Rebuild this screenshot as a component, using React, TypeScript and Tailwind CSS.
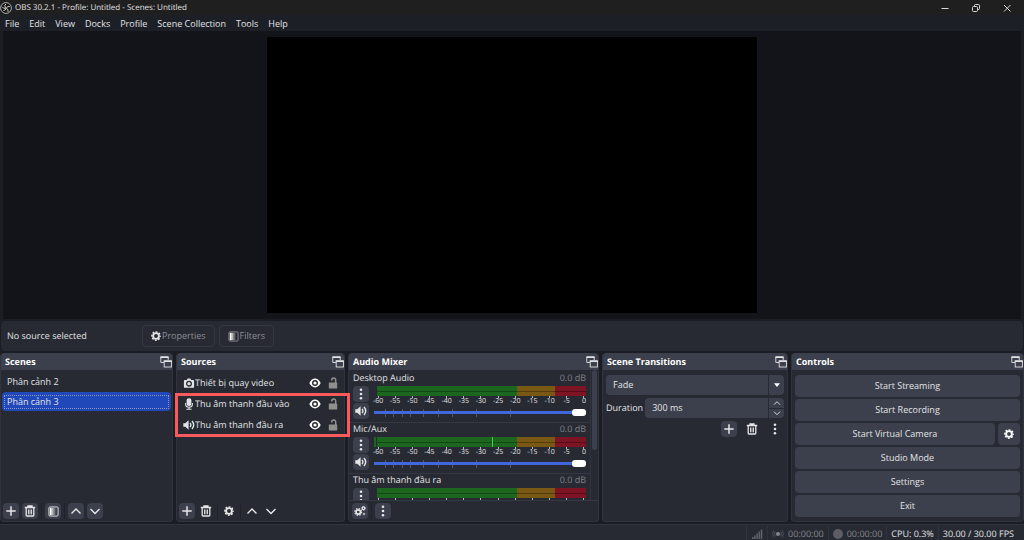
import { useState } from 'react';
import type { ReactNode } from 'react';
import clsx from 'clsx';

const MENUS = ['File', 'Edit', 'View', 'Docks', 'Profile', 'Scene Collection', 'Tools', 'Help'];
const SCENES = ['Phân cảnh 2', 'Phân cảnh 3'];
const CHANNELS = [
  { name: 'Desktop Audio', peak: false, labels: true },
  { name: 'Mic/Aux', peak: true, labels: true },
  { name: 'Thu âm thanh đầu ra', peak: false, labels: false },
];
const DB_MARKS = [-60, -55, -50, -45, -40, -35, -30, -25, -20, -15, -10, -5, 0];
const FADER_MARKS = [5, 9, 13, 17, 23, 30, 37, 48, 64];

type IconProps = { className?: string };

/* ---------- Icons ---------- */

function GearIcon({ className = 'size-[10px]' }: IconProps) {
  return (
    <svg viewBox="0 0 16 16" className={className} fill="none" stroke="currentColor" aria-hidden="true">
      <circle cx="8" cy="8" r="4.6" strokeWidth="3" />
      <circle cx="8" cy="8" r="6.6" strokeWidth="2.4" strokeDasharray="2.9 2.284" strokeDashoffset="1.45" />
    </svg>
  );
}

function GearsIcon() {
  return (
    <svg viewBox="0 0 24 24" className="size-3" fill="none" stroke="currentColor" aria-hidden="true">
      <circle cx="8.5" cy="14" r="4.4" strokeWidth="3.4" />
      <circle cx="8.5" cy="14" r="6.9" strokeWidth="2.2" strokeDasharray="2.9 2.52" />
      <circle cx="19" cy="6.5" r="2.6" strokeWidth="2.4" />
      <circle cx="19" cy="6.5" r="4" strokeWidth="1.4" strokeDasharray="2 2.19" />
      <circle cx="20" cy="18" r="1.6" strokeWidth="1.6" />
    </svg>
  );
}

function TrashIcon() {
  return (
    <svg viewBox="0 0 12 12" className="size-3" fill="none" stroke="currentColor" aria-hidden="true">
      <path d="M.8 2.5h10.4M4 2.2V1h4v1.2" strokeWidth="1.3" />
      <path d="M2.2 3v7.2q0 .8.8.8h6q.8 0 .8-.8V3" strokeWidth="1.3" />
      <path d="M4.5 4.5v4.8M6 4.5v4.8M7.5 4.5v4.8" strokeWidth=".9" />
    </svg>
  );
}

function FilterIcon() {
  return (
    <svg viewBox="0 0 12 12" className="size-[11px]" aria-hidden="true">
      <rect x="1" y="1" width="10" height="10" rx="1.2" fill="none" stroke="currentColor" />
      <path d="M2 2h2v8H2z" fill="#fff" />
      <path d="M4 2h2v8H4z" fill="#fff" opacity=".65" />
      <path d="M6 2h2v8H6z" fill="#fff" opacity=".3" />
    </svg>
  );
}

function PlusIcon() {
  return (
    <svg viewBox="0 0 12 12" className="size-3" aria-hidden="true">
      <path d="M6 1.3v9.4M1.3 6h9.4" stroke="currentColor" strokeWidth="1.5" />
    </svg>
  );
}

function ChevronIcon({ up = false, className = 'size-3' }: IconProps & { up?: boolean }) {
  return (
    <svg viewBox="0 0 12 12" className={className} fill="none" stroke="currentColor" strokeWidth="1.4" aria-hidden="true">
      <path d={up ? 'M1.5 8.5 6 4l4.5 4.5' : 'M1.5 4 6 8.5 10.5 4'} />
    </svg>
  );
}

function DotsIcon() {
  return (
    <svg viewBox="0 0 12 12" className="size-3" fill="currentColor" aria-hidden="true">
      <circle cx="6" cy="1.8" r="1.3" />
      <circle cx="6" cy="6" r="1.3" />
      <circle cx="6" cy="10.2" r="1.3" />
    </svg>
  );
}

function PopoutIcon() {
  return (
    <svg viewBox="0 0 12 12" className="size-3" fill="none" stroke="currentColor" aria-hidden="true">
      <path d="M4 6.5H.8V1h7.4v3" strokeWidth=".9" />
      <path d="M.4 1.2h8.2" strokeWidth="1.6" />
      <rect x="4.2" y="5" width="7.2" height="6" strokeWidth=".9" />
      <path d="M3.8 5.2h8" strokeWidth="1.6" />
    </svg>
  );
}

function SpeakerIcon() {
  return (
    <svg viewBox="0 0 12 12" className="size-3" fill="none" stroke="currentColor" aria-hidden="true">
      <path d="M.3 4.2h2L5.6 1.3v9.4L2.3 7.8h-2z" fill="currentColor" stroke="none" />
      <path d="M7.1 3.8q1.5 2.2 0 4.4M9 2q3.4 4 0 8" strokeWidth="1.4" />
    </svg>
  );
}

function MicIcon() {
  return (
    <svg viewBox="0 0 12 12" className="size-3" fill="none" stroke="currentColor" aria-hidden="true">
      <rect x="3.6" y=".3" width="4.8" height="7.6" rx="2.2" fill="currentColor" stroke="none" />
      <path d="M2.6 5v1.2q0 3 3.4 3t3.4-3V5M6 9v2M3.4 11.3h5.2" strokeWidth="1.1" />
    </svg>
  );
}

function CameraIcon() {
  return (
    <svg viewBox="0 0 12 12" className="size-3" aria-hidden="true">
      <path
        d="M1.8 3h2L4.7 1.6h2.6L8.2 3h2q.9 0 .9.9v6q0 .9-.9.9H1.8q-.9 0-.9-.9v-6q0-.9.9-.9z"
        fill="currentColor"
      />
      <circle cx="6" cy="6.7" r="2.3" fill="none" stroke="#272a33" strokeWidth="1.3" />
    </svg>
  );
}

function EyeIcon() {
  return (
    <svg viewBox="0 0 12 12" className="size-3" aria-hidden="true">
      <path d="M.3 6Q2.700 1.600 6 1.600t5.700 4.400Q9.300 10.400 6 10.400T.3 6z" fill="currentColor" />
      <circle cx="6" cy="6" r="2.3" fill="none" stroke="#272a33" strokeWidth="1.4" />
    </svg>
  );
}

function UnlockIcon() {
  return (
    <svg viewBox="0 0 12 12" className="size-3" aria-hidden="true">
      <rect x="1.8" y="5.6" width="8.4" height="5.8" rx=".4" fill="currentColor" />
      <path d="M8.700 6V3.200Q8.700 1 6.700 1T4.700 3.400" fill="none" stroke="currentColor" strokeWidth="1.5" />
    </svg>
  );
}

function ObsLogo() {
  return (
    <svg viewBox="0 0 24 24" className="size-3" fill="none" aria-hidden="true">
      <circle cx="12" cy="12" r="10.8" fill="#151515" stroke="#d0d0d0" strokeWidth="1.6" />
      <path
        d="M11.5 4q-3.500 3-.5 7.500 1 1.200 1.500 1.300M19.500 9q-5-1.500-7 3.800-1.500 4-5.500 4.200M12.500 12.800q5 1.500 3.500 7M4.500 9.500q2 4.500 7 3"
        stroke="#d0d0d0"
        strokeWidth="2"
      />
    </svg>
  );
}

/* ---------- Building blocks ---------- */

type ToolButtonProps = { label: string; flat?: boolean; children: ReactNode };

function ToolButton({ label, flat, children }: ToolButtonProps) {
  return (
    <button
      type="button"
      aria-label={label}
      className={clsx(
        'flex size-4 shrink-0 items-center justify-center rounded-sm text-[#e6e6e9]',
        !flat && 'bg-[#3c404c]'
      )}
    >
      {children}
    </button>
  );
}

function Divider() {
  return <span className="h-4 w-px bg-[#1f222a]" />;
}

function Dock({ title, children }: { title: string; children: ReactNode }) {
  return (
    <section className="flex min-w-0 flex-col rounded-sm border border-t-0 border-[#31343f] bg-[#272a33]">
      <header className="flex h-[17px] shrink-0 items-center justify-between rounded-t-sm bg-[#3c404c] pl-1">
        <h2 className="font-bold text-white">{title}</h2>
        <button type="button" aria-label={`Undock ${title}`}>
          <PopoutIcon />
        </button>
      </header>
      {children}
    </section>
  );
}

function SourceRow({ name, icon }: { name: string; icon: ReactNode }) {
  return (
    <li className="flex h-[21px] items-center pl-1.5">
      {icon}
      <span className="flex-1 truncate">{name}</span>
      <button type="button" aria-label={`Hide ${name}`} className="mr-1.5 text-white">
        <EyeIcon />
      </button>
      <button type="button" aria-label={`Lock ${name}`} className="mr-[5px] text-[#8f8f8c]">
        <UnlockIcon />
      </button>
    </li>
  );
}

function Channel({ name, peak, labels }: { name: string; peak: boolean; labels: boolean }) {
  const [volume, setVolume] = useState(100);

  return (
    <div className="h-[51px] shrink-0 border-b border-[#343843] px-1">
      <div className="flex h-3 items-center justify-between">
        <span>{name}</span>
        <span className="text-[#7f828a]">0.0 dB</span>
      </div>
      <div className="mt-0.5 flex gap-[5px]">
        <div className="flex flex-col gap-px">
          <ToolButton label={`${name} options`}>
            <DotsIcon />
          </ToolButton>
          <ToolButton label={`Mute ${name}`}>
            <SpeakerIcon />
          </ToolButton>
        </div>
        <div className="min-w-0 flex-1">
          {/* Level meter, two channels */}
          <div className="relative ml-[3px] flex h-[10px]">
            <span className="w-[67%] bg-[#1c661f]" />
            <span className="w-[18%] bg-[#785813]" />
            <span className="flex-1 bg-[#7d1424]" />
            <span className="absolute inset-x-0 top-[5px] h-px bg-black/30" />
            {peak && <span className="absolute inset-y-0 left-[55%] w-px bg-[#3ed043]" />}
            {peak && <span className="absolute inset-y-0 -left-[3px] w-0.5 bg-[#1c661f]" />}
          </div>
          <div className="ml-1 mr-0.5 flex h-[9px] justify-between text-[7px] leading-[7px]">
            {DB_MARKS.map((db) => (
              <span key={db} className="flex w-0 flex-col items-center">
                <span className="h-0.5 w-px shrink-0 bg-[#b5b7bd]" />
                {labels && db}
              </span>
            ))}
          </div>
          <div className="relative flex h-[15px] items-center">
            {FADER_MARKS.map((mark) => (
              <span key={mark} className="absolute top-1 h-2 w-px bg-[#565a66]" style={{ left: `${mark}%` }} />
            ))}
            <input
              type="range"
              aria-label={`${name} volume`}
              value={volume}
              onChange={(e) => setVolume(Number(e.target.value))}
              className="relative h-[3px] w-full appearance-none bg-[#4068dc] [&::-webkit-slider-thumb]:h-[7px] [&::-webkit-slider-thumb]:w-[14px] [&::-webkit-slider-thumb]:appearance-none [&::-webkit-slider-thumb]:rounded-[3px] [&::-webkit-slider-thumb]:bg-white"
            />
          </div>
        </div>
      </div>
    </div>
  );
}

function ControlButton({ children }: { children: ReactNode }) {
  return (
    <button type="button" className="h-[22px] min-w-0 flex-1 rounded-sm bg-[#3c404c] text-center">
      {children}
    </button>
  );
}

/* ---------- Window ---------- */

export default function App() {
  const [selected, setSelected] = useState('Phân cảnh 3');
  const [duration, setDuration] = useState('300 ms');

  return (
    <div className="flex min-h-screen flex-col bg-[#1b1d24] font-['Open_Sans','Noto_Sans',sans-serif] text-[9px] leading-3 text-[#e2e3e6] [text-rendering:geometricPrecision]">
      <header className="flex h-[15px] items-center bg-[#1f1f1f]">
        <ObsLogo />
        <h1 className="ml-[3px] flex-1 text-[8px]">OBS 30.2.1 - Profile: Untitled - Scenes: Untitled</h1>
        <div className="flex gap-[19px] pr-[11px] text-[#d8d8d8]">
          <button type="button" aria-label="Minimize">
            <svg viewBox="0 0 12 12" className="size-3"><path d="M2.5 6.5h7" stroke="currentColor" /></svg>
          </button>
          <button type="button" aria-label="Restore">
            <svg viewBox="0 0 12 12" className="size-3" fill="none" stroke="currentColor">
              <rect x="2.5" y="4.5" width="5" height="5" rx="1" />
              <path d="M4.5 4.500v-1q0-1 1-1h3q1 0 1 1v3q0 1-1 1h-1" />
            </svg>
          </button>
          <button type="button" aria-label="Close">
            <svg viewBox="0 0 12 12" className="size-3"><path d="m3 3 6.500 6.500M9.500 3 3 9.500" stroke="currentColor" /></svg>
          </button>
        </div>
      </header>

      <nav className="flex h-4 items-center gap-[10px] bg-[#1d1f26] pl-[5px] pt-px">
        {MENUS.map((menu) => (
          <button key={menu} type="button">{menu}</button>
        ))}
      </nav>

      {/* Preview */}
      <main className="mx-[3px] flex flex-1 justify-center bg-[#131419] py-1.5">
        <div className="aspect-video min-h-[276px] bg-black" />
      </main>

      <div className="mx-px mt-0.5 flex h-[30px] items-center rounded-sm bg-[#272a33] pl-1.5">
        <span className="w-[135px]">No source selected</span>
        <button type="button" className="flex h-[22px] items-center gap-px rounded-sm border border-[#343843] px-2 text-[#8b8d94]">
          <span className="text-[#e2e3e6]"><GearIcon /></span>
          Properties
        </button>
        <button type="button" className="ml-1 flex h-[22px] items-center gap-px rounded-sm border border-[#343843] px-2 text-[#8b8d94]">
          <FilterIcon />
          Filters
        </button>
      </div>

      <div className="mt-0.5 grid h-[169px] grid-cols-[173fr_169fr_251fr_186fr_233fr] grid-rows-1 gap-[3px]">
        <Dock title="Scenes">
          <ul className="flex-1 px-px pt-0.5">
            {SCENES.map((scene) => (
              <li key={scene} className="mb-px">
                <button
                  type="button"
                  onClick={() => setSelected(scene)}
                  className={clsx(
                    'block h-[19px] w-full rounded-sm p-0.5 text-left',
                    selected === scene && 'bg-[#2148b8]'
                  )}
                >
                  <span
                    className={clsx(
                      'block border px-0.5',
                      selected === scene ? 'border-dotted border-[#8f98b5]' : 'border-transparent'
                    )}
                  >
                    {scene}
                  </span>
                </button>
              </li>
            ))}
          </ul>
          <div className="flex items-center gap-[3px] px-0.5 pb-0.5">
            <ToolButton label="Add scene"><PlusIcon /></ToolButton>
            <ToolButton label="Remove scene"><TrashIcon /></ToolButton>
            <Divider />
            <ToolButton label="Scene filters"><FilterIcon /></ToolButton>
            <Divider />
            <ToolButton label="Move scene up"><ChevronIcon up /></ToolButton>
            <ToolButton label="Move scene down"><ChevronIcon /></ToolButton>
          </div>
        </Dock>

        <Dock title="Sources">
          <div className="flex-1 pt-0.5">
            <ul>
              <SourceRow name="Thiết bị quay video" icon={<CameraIcon />} />
            </ul>
            <ul className="relative">
              <SourceRow name="Thu âm thanh đầu vào" icon={<MicIcon />} />
              <SourceRow name="Thu âm thanh đầu ra" icon={<SpeakerIcon />} />
              <li aria-hidden="true" className="pointer-events-none absolute -bottom-0.5 -left-0.5 -right-1.5 top-0 z-10 border-3 border-[#fb5a5c]" />
            </ul>
          </div>
          <div className="flex items-center gap-[3px] px-0.5 pb-0.5">
            <ToolButton label="Add source"><PlusIcon /></ToolButton>
            <ToolButton label="Remove source" flat><TrashIcon /></ToolButton>
            <Divider />
            <ToolButton label="Source properties" flat><GearIcon /></ToolButton>
            <Divider />
            <ToolButton label="Move source up" flat><ChevronIcon up /></ToolButton>
            <ToolButton label="Move source down" flat><ChevronIcon /></ToolButton>
          </div>
        </Dock>

        <Dock title="Audio Mixer">
          <div className="flex min-h-0 flex-1 overflow-hidden border-b border-[#343843]">
            <div className="flex min-w-0 flex-1 flex-col pt-0.5">
              {CHANNELS.map((channel) => (
                <Channel key={channel.name} {...channel} />
              ))}
            </div>
            <div className="w-2 border-l border-[#31343f] px-px">
              <div className="h-[80px] rounded-sm bg-[#3c404c]" />
            </div>
          </div>
          <div className="flex items-center gap-[3px] px-[3px] py-0.5">
            <ToolButton label="Advanced audio properties"><GearsIcon /></ToolButton>
            <Divider />
            <ToolButton label="Mixer menu"><DotsIcon /></ToolButton>
          </div>
        </Dock>

        <Dock title="Scene Transitions">
          <div className="flex flex-col gap-[3px] px-[3px] pt-[5px]">
            <div className="relative flex h-5 items-center rounded-sm bg-[#3c404c]">
              <select aria-label="Transition" className="h-full w-full appearance-none pl-[7px]">
                <option>Fade</option>
                <option>Cut</option>
              </select>
              <span className="pointer-events-none absolute inset-y-0 right-0 flex w-4 items-center justify-center border-l border-[#272a33]">
                <svg viewBox="0 0 8 5" className="h-1 w-1.5"><path d="M0 0h8L4 5z" fill="white" /></svg>
              </span>
            </div>
            <div className="flex items-center gap-0.5">
              <label htmlFor="duration">Duration</label>
              <div className="flex h-5 min-w-0 flex-1 rounded-sm bg-[#3c404c]">
                <input
                  id="duration"
                  value={duration}
                  onChange={(e) => setDuration(e.target.value)}
                  className="w-full min-w-0 flex-1 pl-[7px]"
                />
                <div className="flex w-4 flex-col border-l border-[#272a33]">
                  <button type="button" aria-label="Increase" className="flex flex-1 items-center justify-center border-b border-[#272a33]">
                    <ChevronIcon up className="size-2" />
                  </button>
                  <button type="button" aria-label="Decrease" className="flex flex-1 items-center justify-center">
                    <ChevronIcon className="size-2" />
                  </button>
                </div>
              </div>
            </div>
            <div className="flex justify-end gap-[7px] pr-px">
              <ToolButton label="Add transition"><PlusIcon /></ToolButton>
              <ToolButton label="Remove transition" flat><TrashIcon /></ToolButton>
              <ToolButton label="Transition menu" flat><DotsIcon /></ToolButton>
            </div>
          </div>
        </Dock>

        <Dock title="Controls">
          <div className="flex flex-col gap-0.5 px-[3px] pt-[5px]">
            <div className="flex"><ControlButton>Start Streaming</ControlButton></div>
            <div className="flex"><ControlButton>Start Recording</ControlButton></div>
            <div className="flex gap-[3px]">
              <ControlButton>Start Virtual Camera</ControlButton>
              <button type="button" aria-label="Virtual camera settings" className="flex w-[22px] items-center justify-center rounded-sm bg-[#3c404c] text-white">
                <GearIcon />
              </button>
            </div>
            <div className="flex"><ControlButton>Studio Mode</ControlButton></div>
            <div className="flex"><ControlButton>Settings</ControlButton></div>
            <div className="flex"><ControlButton>Exit</ControlButton></div>
          </div>
        </Dock>
      </div>

      <footer className="mt-0.5 flex h-[17px] items-center justify-end border-t border-[#31343f] bg-[#272a33] pr-1.5 pt-px text-[#84868d]">
        <span className="flex h-full items-center border-l border-[#31343f] px-1">
          <svg viewBox="0 0 12 12" className="size-3" fill="#5f626b" aria-hidden="true">
            <path d="M1 9h1.5v2H1zM3.2 7.500h1.500V11H3.200zM5.400 5.500h1.500V11H5.400zM7.600 3.500h1.500V11H7.600zM9.800 1.500h1.500V11H9.800z" />
          </svg>
        </span>
        <span className="flex h-full items-center gap-1 border-l border-[#31343f] px-1">
          <svg viewBox="0 0 12 12" className="size-3" fill="none" stroke="#4b4e58" aria-hidden="true">
            <circle cx="6" cy="6" r="2" fill="#84868d" stroke="none" />
            <path d="M3.3 3.500q-1.500 2.500 0 5M8.700 3.500q1.500 2.500 0 5M1.500 2.500q-1.500 3.500 0 7M10.500 2.500q1.500 3.500 0 7" />
          </svg>
          00:00:00
        </span>
        <span className="flex h-full items-center gap-1 border-l border-[#31343f] px-1">
          <span className="size-[10px] rounded-full bg-[#5b5e66]" />
          00:00:00
        </span>
        <span className="flex h-full items-center border-l border-[#31343f] px-1 text-[#e2e3e6]">CPU: 0.3%</span>
        <span className="flex h-full items-center border-l border-[#31343f] px-1 text-[#e2e3e6]">30.00 / 30.00 FPS</span>
      </footer>
    </div>
  );
}
